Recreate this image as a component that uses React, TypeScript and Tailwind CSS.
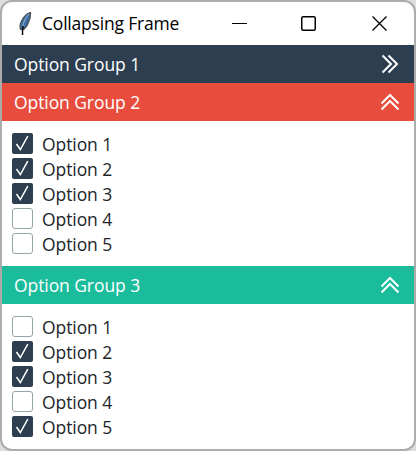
import { useState } from "react";

type Group = { title: string; color: string; open: boolean; checked: boolean[] };

const initialGroups: Group[] = [
  { title: "Option Group 1", color: "bg-[#2c3e50]", open: false, checked: [false, false, false, false, false] },
  { title: "Option Group 2", color: "bg-[#e84c3d]", open: true, checked: [true, true, true, false, false] },
  { title: "Option Group 3", color: "bg-[#1abc9c]", open: true, checked: [false, true, true, false, true] },
];

function Feather() {
  return (
    <svg className="ml-[16px] h-6 w-4 shrink-0" viewBox="0 0 16 24" fill="none">
      <path d="M12.500 0.500C9 1.500 5 5.500 3 10C1.800 13 1.800 15.500 2.600 17.400L6.200 17.200C8.300 15 10.200 12 11 9C12.200 6.500 12.700 4 12.500.5Z" fill="#3a6ea8" stroke="#4b4f50" strokeWidth="1.200" />
      <path d="M11 2C7.500 5.500 5.500 10 4.600 15" stroke="#b0bcc4" strokeWidth="0.900" />
      <path d="M5 14C4.500 17 4.500 19 4.500 23" stroke="#080808" strokeWidth="1.500" />
    </svg>
  );
}

function Chevrons({ open }: { open: boolean }) {
  return (
    <svg className="h-[22px] w-[22px]" viewBox="0 0 22 22" fill="none" stroke="#fff" strokeWidth="2">
      {open ? (
        <path d="M2.500 12.500L11 4L19.500 12.500M2.500 18.500L11 10L19.500 18.500" />
      ) : (
        <path d="M3.500 2.500L12 11L3.500 19.500M9.500 2.500L18 11L9.500 19.500" />
      )}
    </svg>
  );
}

function Checkbox({ checked }: { checked: boolean }) {
  return checked ? (
    <span className="flex size-[21px] shrink-0 rounded-[2px] bg-[#2c3e50]">
      <svg className="size-[21px]" viewBox="0 0 21 21" fill="none" stroke="#fff" strokeWidth="1.500">
        <path d="M4.500 11L8.300 16.500L15.800 3.200" />
      </svg>
    </span>
  ) : (
    <span className="size-[21px] shrink-0 rounded-[3px] border border-[#95a5a6] bg-white" />
  );
}

export default function App() {
  const [groups, setGroups] = useState(initialGroups);

  const toggleGroup = (i: number) =>
    setGroups(groups.map((g, k) => (k === i ? { ...g, open: !g.open } : g)));
  const toggleOption = (i: number, j: number) =>
    setGroups(
      groups.map((g, k) => (k === i ? { ...g, checked: g.checked.map((c, n) => (n === j ? !c : c)) } : g)),
    );

  return (
    <div className="h-[451px] w-[416px] bg-[#dedede] font-['Open_Sans',sans-serif] text-[17.500px] tracking-[-0.080px]">
      <div className="flex h-full w-full flex-col overflow-hidden rounded-[12px] border-2 border-[#acacac] bg-white">
        <div className="flex h-[43px] shrink-0 items-center text-black">
          <Feather />
          <h1 className="ml-[8px] flex-1 whitespace-nowrap tracking-[-0.200px]">Collapsing Frame</h1>
          <svg className="mr-[27px] h-[15px] w-[155px]" viewBox="0 0 155 15" fill="none" stroke="#000">
            <path d="M0 7.500H15" />
            <rect x="69.750" y="0.750" width="13.500" height="13.500" rx="1.500" strokeWidth="1.500" />
            <path d="M140.500.500L154.500 14.500M154.500.500L140.500 14.500" strokeWidth="1.300" />
          </svg>
        </div>
        {groups.map((g, i) => (
          <section key={g.title}>
            <button
              className={`flex h-[38px] w-full items-center justify-between pr-[13px] pl-3 text-white ${g.color}`}
              onClick={() => toggleGroup(i)}
            >
              <span>{g.title}</span>
              <Chevrons open={g.open} />
            </button>
            {g.open && (
              <div className="px-2.5 py-2.5">
                {g.checked.map((c, j) => (
                  <button
                    key={j}
                    className="flex h-[25px] items-center gap-[9px] text-[#212529]"
                    onClick={() => toggleOption(i, j)}
                  >
                    <Checkbox checked={c} />
                    <span className="pt-0.5">Option {j + 1}</span>
                  </button>
                ))}
              </div>
            )}
          </section>
        ))}
      </div>
    </div>
  );
}
